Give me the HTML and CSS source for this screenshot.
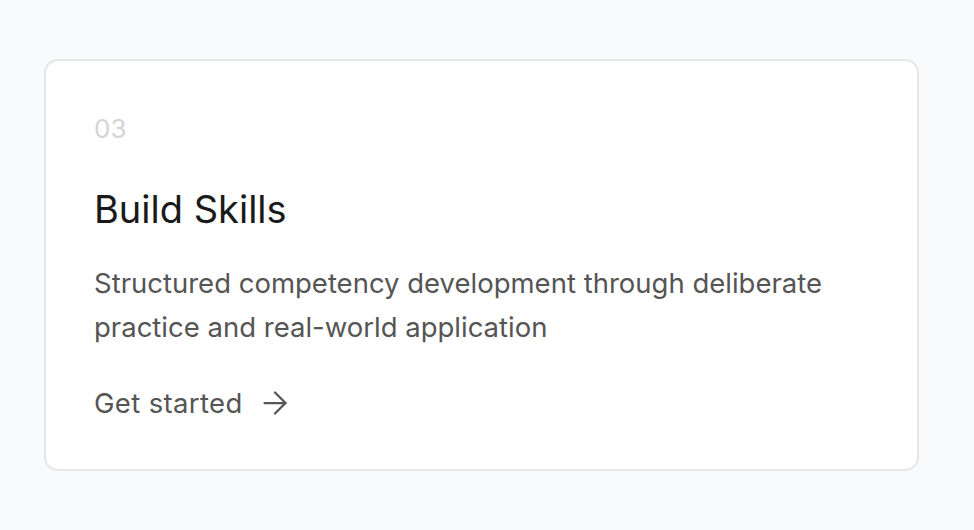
FILE: index.html
```html
<!DOCTYPE html>
<html>
<head>
<meta charset="utf-8">
<link rel="stylesheet" href="styles.css">
</head>
<body>
<div class="page">
  <div class="card">
    <div class="num">03</div>
    <h2 class="title">Build Skills</h2>
    <p class="desc">Structured competency development through deliberate practice and real-world application</p>
    <a class="link" href="#">Get started
      <svg class="arrow" width="24" height="24" viewBox="4 4 16 16" fill="none" stroke="currentColor" stroke-width="1.5" stroke-linecap="round" stroke-linejoin="round"><path d="M5 12h14"/><path d="M12 5l7 7-7 7"/></svg>
    </a>
  </div>
</div>
</body>
</html>
```
FILE: styles.css
```css
html, body { margin: 0; padding: 0; }
body {
  background: #f9fafb;
  font-family: Inter, "Noto Sans", sans-serif;
}
.page {
  padding: 59px 55px 59px 44px;
}
.card {
  background: #fff;
  border: 2px solid #e6e6e6;
  border-radius: 14px;
  padding: 48px;
  height: 412px;
  box-sizing: border-box;
}
.num {
  font-size: 26px;
  color: #d4d4d4;
  line-height: 32px;
  margin-top: 4px;
}
.title {
  margin: 40px 0 0 0;
  font-size: 38px;
  font-weight: 400;
  color: #1a1a1a;
  line-height: 48px;
}
.desc {
  margin: 28px 0 0 0;
  font-size: 27.5px;
  color: #555;
  line-height: 44px;
  max-width: 760px;
}
.link {
  display: flex;
  align-items: center;
  gap: 20px;
  margin-top: 37px;
  font-size: 27.5px;
  letter-spacing: 0.35px;
  color: #555;
  text-decoration: none;
}
.arrow {
  flex: none;
}
```
